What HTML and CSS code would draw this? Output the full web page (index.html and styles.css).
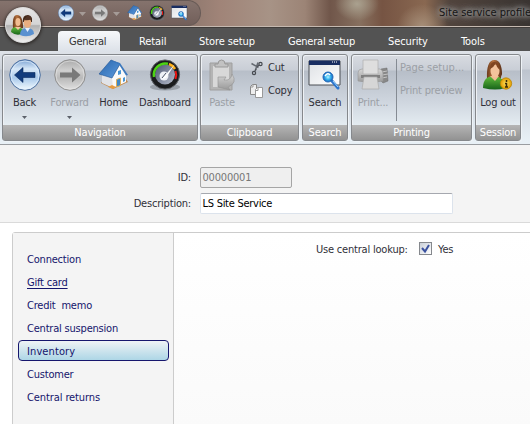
FILE: index.html
```html
<!DOCTYPE html>
<html lang="en">
<head>
<meta charset="utf-8">
<title>Site service profile</title>
<link rel="stylesheet" href="styles.css">
</head>
<body>
<svg class="defs" width="0" height="0" aria-hidden="true">
  <defs>
    <linearGradient id="blueBall" x2="0" y2="1"><stop offset="0" stop-color="#7ba3d3"/><stop offset=".3" stop-color="#d7e7f7"/><stop offset=".6" stop-color="#a9c9eb"/><stop offset="1" stop-color="#f5fcff"/></linearGradient>
    <linearGradient id="greyBall" x2="0" y2="1"><stop offset="0" stop-color="#aaa"/><stop offset=".35" stop-color="#cfcfcf"/><stop offset=".6" stop-color="#b9b9b9"/><stop offset="1" stop-color="#e2e2e2"/></linearGradient>
    <linearGradient id="roof" x2="1" y2="1"><stop offset="0" stop-color="#2966ad"/><stop offset="1" stop-color="#5b99dc"/></linearGradient>
    <linearGradient id="dial" x2="1" y2="1"><stop offset="0" stop-color="#4b5570"/><stop offset="1" stop-color="#b7bdcb"/></linearGradient>
    <linearGradient id="grey" x2="0" y2="1"><stop offset="0" stop-color="#d5d5d5"/><stop offset="1" stop-color="#999"/></linearGradient>
    <linearGradient id="screen" x2="1" y2="1"><stop offset="0" stop-color="#dde0e4"/><stop offset="1" stop-color="#fff"/></linearGradient>
    <radialGradient id="lens"><stop offset="0" stop-color="#b9f4ff"/><stop offset=".5" stop-color="#39b7f0"/><stop offset="1" stop-color="#1562c0"/></radialGradient>
    <linearGradient id="hair" x2="1" y2="0"><stop offset="0" stop-color="#6b3a1c"/><stop offset=".4" stop-color="#b5713e"/><stop offset="1" stop-color="#5a2f16"/></linearGradient>
    <linearGradient id="green" x2="0" y2="1"><stop offset="0" stop-color="#63bd3c"/><stop offset="1" stop-color="#17641a"/></linearGradient>
    <radialGradient id="gold"><stop offset="0" stop-color="#ffe25c"/><stop offset="1" stop-color="#df9b00"/></radialGradient>
    <symbol id="i-back" viewBox="0 0 32 32"><circle cx="16" cy="16" r="15.3" fill="url(#blueBall)" stroke="#4c6f9f"/><circle cx="16" cy="16" r="14" fill="none" stroke="#e4f1fd" stroke-opacity=".7"/><path d="M5.500 16 14 8.500v5h12v5H14v5z" fill="#113b7d" stroke="#09295c" stroke-width=".6"/></symbol>
    <symbol id="i-forward" viewBox="0 0 32 32"><circle cx="16" cy="16" r="15.3" fill="url(#greyBall)" stroke="#909090"/><circle cx="16" cy="16" r="14" fill="none" stroke="#e8e8e8" stroke-opacity=".6"/><path d="M26.500 16 18 8.500v5H6v5h12v5z" fill="#797979"/></symbol>
    <symbol id="i-home" viewBox="0 0 32 32"><path d="m3 24 12 6 15-7-2-3-13 5-10-4z" fill="#c08b54"/><path d="M4 15v9l11 5V17z" fill="#e1e3e8"/><path d="m14 18 8-12 6 9v8l-13 6z" fill="#fafafa"/><path d="M1 15 13 1l9 4-8 14z" fill="url(#roof)" stroke="#1e5292" stroke-width=".6"/><path d="m13 1 9 3 8 12-2 .500-7-11z" fill="#3d79bd"/><path d="M18.500 20.500l4-1.500v7.500l-4 1.500z" fill="#3e86c5" stroke="#dcae5c"/><path d="m20 12 3-1v4l-3 1zm5 7 2-1v4l-2 1z" fill="#4795d5"/><path d="m10 28 5 2 3-2-4-2z" fill="#e69b42"/></symbol>
    <symbol id="i-dash" viewBox="0 0 32 32"><ellipse cx="16" cy="28" rx="15" ry="3.500" fill="#70757d" opacity=".5"/><circle cx="16" cy="15.500" r="14.600" fill="#1b1c1e" stroke="#606368"/><circle cx="16" cy="15.500" r="10" fill="url(#dial)"/><path d="M5 18A11.500 11.500 0 0 1 19 4.800" fill="none" stroke="#4cd314" stroke-width="2.500"/><path d="M20 5a11.500 11.500 0 0 1 6 5" fill="none" stroke="#ffb11b" stroke-width="2.500"/><path d="M26.500 12a11 11 0 0 1 0 8" fill="none" stroke="#f11410" stroke-width="2"/><circle cx="15" cy="17" r="4.500" fill="#eef1f6"/><path d="m13 20 13-15-9 14z" fill="#fff"/><path d="m13 19 4-5" stroke="#4d5669"/></symbol>
    <symbol id="i-search" viewBox="0 0 34 32"><path d="M1 2h31v24H1z" fill="url(#screen)" stroke="#4b4e54"/><path d="M1 1.500h31V6H1z" fill="#182d61"/><path d="M24 3h6" stroke="#fff" stroke-dasharray="1 1"/><path d="m24 22 6 7" stroke="#2c74cc" stroke-width="3" stroke-linecap="round"/><path d="m25 22 5 6" stroke="#9dd5fc"/><circle cx="20" cy="18" r="5" fill="url(#lens)" stroke="#246bb7"/><path d="M17 17q3-4 5-1" fill="none" stroke="#fff" stroke-width="1.500"/></symbol>
    <symbol id="i-people" viewBox="0 0 28 26"><path d="M4 16Q3 3 8 3q6 0 6 13z" fill="url(#hair)"/><path d="M2 20q0-5 6-5 6 0 7 6-7 4-13-1z" fill="url(#green)"/><ellipse cx="9" cy="10" rx="2.600" ry="4" fill="#f1bd91"/><path d="m6 15 3 3 3-3z" fill="#f2c6a0"/><path d="M11 23q0-7 7-7 7 0 7 6-7 4-14 1z" fill="#5a91d0"/><path d="M14 10q-1-7 5-7 5 1 4 7z" fill="#402718"/><ellipse cx="18.500" cy="11" rx="3.800" ry="4.800" fill="#e9ae80"/><path d="M15 8q4 1 8-1-2-4-5-3z" fill="#513324"/><path d="m16 16 2.500 4 2.500-4z" fill="#e7f1ff"/></symbol>
  </defs>
</svg>
<div class="window">
  <header class="titlebar">
    <div class="quick">
      <svg class="q"><use href="#i-back"/></svg><i class="drop"></i>
      <svg class="q"><use href="#i-forward"/></svg><i class="drop"></i>
      <svg class="q home"><use href="#i-home"/></svg>
      <svg class="q dash"><use href="#i-dash"/></svg>
      <svg class="q find"><use href="#i-search"/></svg>
    </div>
    <div class="title">Site service profile</div>
  </header>
  <nav class="tabs">
    <span class="tab active">General</span><span class="tab t2">Retail</span><span class="tab t3">Store setup</span><span class="tab t4">General setup</span><span class="tab t5">Security</span><span class="tab t6">Tools</span>
  </nav>
  <div class="orb"><svg width="28" height="26"><use href="#i-people"/></svg></div>
  <section class="ribbon">
    <div class="group nav">
      <div class="tools">
        <div class="tool back"><svg width="32" height="32"><use href="#i-back"/></svg><span>Back</span><i class="caret"></i></div>
        <div class="tool fwd off"><svg width="32" height="32"><use href="#i-forward"/></svg><span>Forward</span><i class="caret"></i></div>
        <div class="tool hm"><svg width="32" height="32"><use href="#i-home"/></svg><span>Home</span></div>
        <div class="tool db"><svg width="32" height="32"><use href="#i-dash"/></svg><span>Dashboard</span></div>
      </div>
      <footer>Navigation</footer>
    </div>
    <div class="group clip">
      <div class="tools">
        <div class="tool paste off"><svg width="32" height="32" viewBox="0 0 32 32"><path d="M4 4h22v27H4z" fill="#b4b4b4" stroke="#9f9f9f"/><path d="M7 7h16v21H7z" fill="#d8d8d8"/><path d="M9 8V5h3q0-4 3.500-4T19 5h3v3z" fill="#c2c2c2" stroke="#999"/><path d="M12 18h8l-2 3q7 1 8-6 6 9-4 13l2 3-12-3z" fill="url(#grey)" stroke="#929292" stroke-width=".6"/></svg><span>Paste</span></div>
        <div class="side">
          <div class="small cut"><svg width="16" height="16" viewBox="0 0 16 16"><path d="m2.500 3.500 7 4M9 2.500 6.500 10" stroke="#666b72" stroke-width="1.600"/><circle cx="11.500" cy="4" r="1.600" fill="none" stroke="#464a50" stroke-width="1.200"/><circle cx="5" cy="13" r="1.600" fill="none" stroke="#464a50" stroke-width="1.200"/><path d="m8 7 2-2M7 9l-1 2" fill="none" stroke="#50545b" stroke-width="1.400"/></svg><span>Cut</span></div>
          <div class="small"><svg width="16" height="16" viewBox="0 0 16 16"><path d="M3.500 1.500h4v10h-6v-8z" fill="#eee" stroke="#898989"/><path d="M8.500 4.500h5v10h-7v-8z" fill="#fff" stroke="#999"/><path d="M6.500 7.500h2.500v-3M4 1.500v2.500H1.500" fill="none" stroke="#999"/></svg><span>Copy</span></div>
        </div>
      </div>
      <footer>Clipboard</footer>
    </div>
    <div class="group search">
      <div class="tools"><div class="tool sr"><svg width="34" height="32"><use href="#i-search"/></svg><span>Search</span></div></div>
      <footer>Search</footer>
    </div>
    <div class="group print">
      <div class="tools">
        <div class="tool pr off"><svg width="32" height="32" viewBox="0 0 32 32"><path d="m24 10 6-1 1 13-5 2-4-4z" fill="#888" stroke="#6d6d6d" stroke-width=".5"/><path d="m25 13 5-1m-5 4 6-1m-6 4 5-1" stroke="#c4c4c4"/><path d="M1 14q0-4 4-4h18q3 1 3 5v7q-12 3-25 0z" fill="url(#grey)" stroke="#999" stroke-width=".6"/><path d="M6 1h15v14H6z" fill="#dedede" stroke="#b0b0b0" stroke-width=".7"/><path d="M4 16h19v3H4z" fill="#808080"/><path d="M7 18h13l2 12H5z" fill="#d6d6d6" stroke="#aaa" stroke-width=".7"/></svg><span>Print...</span></div>
        <div class="rule"></div>
        <div class="side off"><span class="ps">Page setup...</span><span class="pp">Print preview</span></div>
      </div>
      <footer>Printing</footer>
    </div>
    <div class="group session">
      <div class="tools"><div class="tool lo"><svg width="32" height="32" viewBox="0 0 32 32"><path d="M5 21Q4 1 12.500 1 21 1 20 21z" fill="url(#hair)"/><path d="M1 29q0-12 11-12 12 1 11 12-9 3-22 0z" fill="url(#green)"/><path d="M8 17h9l-4 5z" fill="#efbc92"/><ellipse cx="13" cy="12" rx="4.500" ry="6.500" fill="#f3c39b"/><path d="M8 10q4-2 6-6 0 4 4 7-1-8-5-8-5-1-5 7z" fill="#814621"/><path d="M20 20v-2q1-4 4-4 4 0 4 6" fill="none" stroke="#bdc3ca" stroke-width="2"/><circle cx="24" cy="24.500" r="5.700" fill="url(#gold)" stroke="#b78100" stroke-width=".7"/><path d="M24.500 21v2m-1.500 1.500h1.500V28M23 28h3" fill="none" stroke="#3b2d08" stroke-width="1.500"/></svg><span>Log out</span></div></div>
      <footer>Session</footer>
    </div>
  </section>
  <section class="form">
    <div class="row"><label class="l-id">ID:</label><div class="field id">00000001</div></div>
    <div class="row"><label class="l-desc">Description:</label><div class="field desc">LS Site Service</div></div>
  </section>
  <main class="panel">
    <aside class="menu">
      <a>Connection</a><a><u>Gift card</u></a><a>Credit&nbsp; memo</a><a>Central suspension</a><a class="m5 selected">Inventory</a><a>Customer</a><a class="m7">Central returns</a>
    </aside>
    <div class="content"><label class="lookup">Use central lookup:</label><span class="check"><svg width="11" height="11" viewBox="0 0 11 11"><path d="m2 5 3 3.500L9 2" fill="none" stroke="#3a519f" stroke-width="2"/></svg></span><span class="yes">Yes</span></div>
  </main>
</div>
</body>
</html>
```
FILE: styles.css
```css
* { box-sizing: border-box; }
body { margin: 0; font: 11px/14px "DejaVu Sans Condensed", "DejaVu Sans", sans-serif; font-stretch: condensed; letter-spacing: -.2px; color: #303038; background: #fff; }
svg { display: block; flex: none; }
.defs { position: absolute; }
.window { position: relative; width: 530px; height: 424px; overflow: hidden; display: flex; flex-direction: column; white-space: nowrap; }
.titlebar { height: 27px; flex: none; display: flex; justify-content: space-between; border-bottom: 1px solid #c5b9b0;
  background: radial-gradient(ellipse 22px 17px at 357px 4px, #aaa18f, transparent), radial-gradient(ellipse 25px 22px at 422px 26px, #a58d77, transparent), linear-gradient(90deg, #706562 0, #7e6d67 75px, #8a756c 180px, #a08478 220px, #a79386 270px, #9c8476 305px, #70564a 330px, #87705f 360px, #765443 382px, #896851 425px, #51443d 450px, #393431 530px); }
.quick { width: 201px; height: 26px; padding-left: 58px; display: flex; align-items: center; background: linear-gradient(#85736d, #725f5a); border: 1px solid #675a56; border-left: 0; border-radius: 0 13px 13px 0; }
.q { width: 16px; height: 16px; }
.drop { width: 7px; height: 4px; margin: 2px 6px 0 5px; background: #a59b97; clip-path: polygon(0 0, 100% 0, 50% 100%); }
.home { margin-left: 1px; }
.dash { margin-left: 6px; }
.find { margin-left: 6px; width: 17px; }
.title { width: 91px; height: 26px; padding-top: 6px; letter-spacing: 0; color: #151515; text-shadow: 0 0 4px #aaa, 0 0 6px #999, 0 0 8px #999, 0 0 10px #888; }
.tabs { position: relative; height: 24px; flex: none; padding: 3px 0 0 58px; background: #535353; border-top: 1px solid #403c3a; display: flex; letter-spacing: -.1px; color: #fff; line-height: 22px; }
.tab { height: 21px; }
.active { width: 62px; padding-left: 11px; letter-spacing: -.25px; background: linear-gradient(#f6f8fa, #dce1e8); border-radius: 4px 4px 0 0; color: #333; }
.t2 { width: 60px; margin-left: 19px; }
.t3 { width: 89px; }
.t4 { width: 100px; letter-spacing: -.22px; }
.t5 { width: 73px; }
.orb { position: absolute; left: 5px; top: 7px; width: 36px; height: 36px; border-radius: 50%; display: flex; align-items: center; justify-content: center; background: linear-gradient(#e6e6e6 0, #d4d4d4 48%, #b1b1b1 52%, #eee 100%); border: 1px solid #ddd; box-shadow: 0 1px 3px 1px #332f2d; }
.ribbon { height: 94px; flex: none; display: flex; gap: 3px; padding: 3px 0 0 2px; background: linear-gradient(#dfe3e9 0, #cdd2da 18px, #bdc4ce 19px, #d2d9e2 50px, #e8f0f6 90px); border-bottom: 1px solid #9a9da1; }
.group { height: 87px; border: 1px solid #85888c; border-radius: 3px; display: flex; flex-direction: column; background: linear-gradient(#d8dbe1 0, #c9ced6 15px, #b7bec8 16px, #cfd6df 47px, #e4ecf1 70px); box-shadow: inset 1px 1px #eef1f5, 1px 1px #eef3f7; }
.nav { width: 196px; }
.clip { width: 99px; margin-left: -1px; }
.search { width: 46px; }
.print { width: 121px; }
.session { width: 46px; }
.tools { height: 70px; display: flex; flex: none; }
.group footer { height: 15px; background: linear-gradient(#b5b5b5, #929292); color: #fff; text-align: center; line-height: 15px; }
.tool { display: flex; flex-direction: column; align-items: center; padding-top: 4px; }
.tool span { line-height: 14px; margin-top: 5px; }
.off { color: #9b9fa5; }
.caret { width: 5px; height: 3px; margin-top: 6px; background: #5c616a; clip-path: polygon(0 0, 100% 0, 50% 100%); }
.back { width: 43px; }
.fwd { width: 47px; }
.hm { width: 41px; }
.db { width: 62px; }
.paste { width: 42px; }
.side { display: flex; flex-direction: column; gap: 9px; padding-top: 6px; }
.ps { letter-spacing: 0; }
.small { display: flex; align-items: center; height: 14px; gap: 3px; margin-left: 6px; }
.sr { width: 44px; }
.pr { width: 42px; }
.rule { width: 1px; height: 62px; margin: 4px 3px 0 2px; background: #858b93; }
.lo { width: 44px; }
.form { height: 78px; flex: none; padding: 22px 0 0; background: #f4f4f4; border-bottom: 1px solid #dadada; display: flex; flex-direction: column; gap: 5px; }
.row { display: flex; line-height: 21px; }
.row label { width: 191px; margin-right: 9px; text-align: right; }
.field { height: 21px; padding: 0 1.500px; line-height: 19px; border: 1px solid #a5a5a5; border-radius: 2px; }
.id { width: 92px; background: #efefef; color: #777; }
.desc { width: 253px; background: #fff; color: #000; letter-spacing: -.27px; border-color: #a5a8af #dce3ec #dce3ec; }
.panel { width: 530px; height: 200px; margin: 9px 0 0 12px; display: flex; border: 1px solid #ccc; border-radius: 3px 0 0; }
.menu { width: 161px; padding: 15px 4px 0 5px; background: #f4f4f4; border-right: 1px solid #ccc; display: flex; flex-direction: column; gap: 2px; color: #14146c; }
.menu a { height: 21px; flex: none; padding-left: 8px; border: 1px solid transparent; line-height: 21px; }
.menu u { text-underline-offset: 2px; }
.menu .m5 { letter-spacing: .1px; }
.menu .m7 { letter-spacing: -.1px; }
.menu .selected { border-color: #16166d; border-radius: 4px; background: linear-gradient(#eff3f5, #add6e6); }
.content { flex: 1; height: 192px; display: flex; padding: 9px 0 0 142px; background: linear-gradient(#fff, #fafafa); line-height: 15px; }
.lookup { width: 103px; }
.check { width: 13px; height: 13px; border: 1px solid #85888d; background: linear-gradient(135deg, #c9cfd8, #fff); }
.yes { margin-left: 6px; }
```
